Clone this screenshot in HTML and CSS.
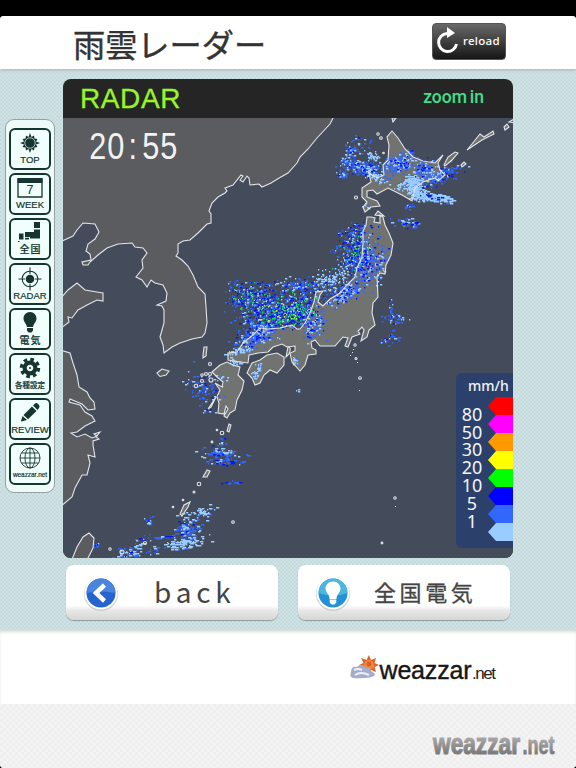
FILE: index.html
```html
<!DOCTYPE html>
<html lang="ja">
<head>
    <meta charset="UTF-8">
    <meta name="viewport" content="width=device-width, initial-scale=1.0">
    <title>雨雲レーダー</title>
    <link rel="stylesheet" href="styles.css">
</head>
<body>
<div class="page">
    <header class="header">
        <h1>雨雲レーダー</h1>
        <button class="reload">
            <svg width="22" height="28" viewBox="0 0 22 28"><path d="M10 6.500A9 9 0 1 0 19.500 17" fill="none" stroke="#fff" stroke-width="3"/><path d="M10 0L18 6L10 11Z" fill="#fff"/></svg>
            <span>reload</span>
        </button>
    </header>

    <main class="main">
        <nav class="side">
            <a class="item">
                <svg width="22" height="22" viewBox="-11 -11 22 22"><path d="M0-10L1.500-6L4-7.500L4.500-4.500L7.500-4L6-1.500L10 0L6 1.500L7.500 4L4.500 4.500L4 7.500L1.500 6L0 10L-1.500 6L-4 7.500L-4.500 4.500L-7.500 4L-6 1.500L-10 0L-6-1.500L-7.500-4L-4.500-4.500L-4-7.500L-1.500-6Z"/><circle r="5.200" stroke="#f0fffc" stroke-width=".7"/></svg>
                <span>TOP</span>
            </a>
            <a class="item">
                <svg width="26" height="22" viewBox="0 0 26 22"><path d="M1 2H25V20H1Z" fill="none" stroke="#17352f" stroke-width="1.300"/><path d="M.5 1H25.500V6H.5Z"/><text x="13" y="17" font-size="12.500" text-anchor="middle">7</text></svg>
                <span>WEEK</span>
            </a>
            <a class="item jp">
                <svg width="24" height="20" viewBox="0 0 24 20"><path d="M16 0H22V6H16ZM16 7.500H22V16.500H12V15H7V10H16ZM1 11.500H5.500V17.500H1ZM7 15.800H11V17.500H7ZM0 19H1.500V20H0Z"/></svg>
                <span>全国</span>
            </a>
            <a class="item">
                <svg width="24" height="24" viewBox="-12 -12 24 24"><circle r="7.800" fill="none" stroke="#17352f" stroke-width="1.100"/><circle r="4.300"/><path d="M0-11.500V-5M0 5V11.500M-11.500 0H-5M5 0H11.500" stroke="#17352f" stroke-width="1.100"/></svg>
                <span>RADAR</span>
            </a>
            <a class="item jp">
                <svg width="16" height="22" viewBox="0 0 16 22"><path d="M8 0C4 0 1.500 3 1.500 6.500C1.500 10 4.500 11.500 4.900 15H11.100C11.500 11.500 14.500 10 14.500 6.500C14.500 3 12 0 8 0ZM5 16H11V18.500L9.500 20.500H6.500L5 18.500Z"/></svg>
                <span>電気</span>
            </a>
            <a class="item small">
                <svg width="22" height="22" viewBox="-11 -11 22 22"><circle r="5.400" fill="none" stroke="#17352f" stroke-width="4.200"/><circle r="8.500" fill="none" stroke="#17352f" stroke-width="3.400" stroke-dasharray="3.600 3.080"/><circle r="1"/></svg>
                <span>各種設定</span>
            </a>
            <a class="item">
                <svg width="22" height="22" viewBox="0 0 22 22"><path d="M2 19L3.500 14L8 18L2.500 19.500ZM4.500 13L13 4.500L17.500 9L9 17.300ZM14 3.500L16 1.500Q17.500 .5 19 2L20 3Q21.300 4.500 20 6L18.500 8Z"/></svg>
                <span>REVIEW</span>
            </a>
            <a class="item tiny">
                <svg width="22" height="22" viewBox="-11 -11 22 22"><g fill="none" stroke="#17352f" stroke-width=".9"><circle r="10"/><ellipse rx="5" ry="10"/><path d="M0-10V10M-10 0H10M-8.500-5H8.500M-8.500 5H8.500"/></g></svg>
                <span>weazzar.net</span>
            </a>
        </nav>

        <div class="content">
            <section class="radar">
                <div class="radar-bar">
                    <h2>RADAR</h2>
                    <a>zoom in</a>
                </div>
                <div class="map">
                    <svg width="450" height="440" viewBox="63 118 450 440">
                        <defs>
                            <g id="asia">
                                <path d="M334 116L330 124L317 138L308 149L300 157L297 163L288 173L280 177.500L271 183L262 187L259 184L250 185L249 178L247 176L243 182L240 180L243 176L241 175L233 185L225 188L227 191L225 193L218 197L212 203L209 211L211 214L211 223L207 224L198 233L190 240L183 241L178 244L178 253L176 256L182 260L188 266L193 275L198 287L205 294L206 307L207 323L205 333L202 337L192 339L180 343L172 347L164 353L163 345L160 337L162 330L164 323V310L162 306L157 305L166 301L167 293L163 285L155 283L151 280L147 287L142 280L136 277L143 268L142 260L147 253L143 248L135 247L132 243L118 244L107 248L98 255L90 262L88 265L83 265L82 262L91 260L90 254L86 251L88 244L95 239L99 232L95 224L83 223L77 230L73 236L60 242V115Z"/>
                                <path d="M60 299L68 290L77 283L85 290L97 292L103 293L103 301L97 300L87 305L78 310L72 318L68 317L69 322L60 329Z"/>
                                <path d="M60 350L70 353L73 363L77 375L79 387L87 392L90 398L94 402L95 409L88 410L82 404L70 399L69 402L80 405L85 412L92 416L95 421L85 426L77 432L71 433L77 437L85 434L92 438L97 436L94 434L100 432L96 437L99 439L93 441L93 445L95 457L88 455L90 463L87 475L82 475L75 488L72 497L60 507Z"/>
                                <path d="M71 562L77 547L83 537L89 533L94 538L93 548L86 562Z"/>
                                <path d="M157 373L162 369L169 371L166 375L160 376.500Z"/>
                            </g>
                            <g id="japan">
                                <path d="M367 217L366 225L363 231L363 243L362 257L357 268L355 277L347 285L340 293L330 299L323 306L318 302L320 295L323 291L316 292L314 302L310 313L305 323L300 329L297 329L292 325L280 328L268 329L260 328L253 335L243 343L237 352L228 353V360L240 362L248 363L249 355L258 353L268 352L273 347L282 344L287 347L295 346L295 351L290 353L292 362L300 371L305 365L308 355L316 354L316 350L312 348L311 342L315 340L320 346H335L343 337L348 338L345 346L348 347L352 337L360 334L358 331L362 327L364 330L361 341L367 337L369 330L375 325L372 313L373 303L378 297L377 277L380 273L385 274L386 265L391 255L393 243L389 233L385 225L383 217L380 215V223L374 222L375 218L371 217Z"/>
                                <path d="M375 215L378 211L384 216Z"/>
                                <path d="M247 373L252 363L260 360L267 355L277 353L284 357L284 365L277 373L270 370L264 375L260 383L255 385L252 378Z"/>
                                <path d="M212 372L220 365L227 362L233 365L240 367L238 375L244 381L242 390L237 400L235 410L230 413L227 418L224 416L228 409L226 406L224 414L218 413L219 403L217 397L220 390L215 383L222 387L223 382L217 377Z"/>
                                <path d="M392 131L387 137L389 145L388 160L383 165L384 175L377 178L369 173L371 182L362 188L362 197L367 202L363 207L365 212L371 207L380 206L377 201L367 197L367 191L373 190L377 194L388 188L402 195L412 201L415 188L423 182L435 178L438 181L445 175L440 170L438 163L443 155L435 163L423 161L413 157L405 149L398 138Z"/>
                                <path d="M444 165L448 157L455 152L458 153L452 160L445 166ZM467 150L472 144L480 134L484 137L493 131L494 134L482 140L473 146ZM461 165L464 162L466 164L462 167ZM504 127L507 124L509 127L505 130ZM509 122L514 119V123ZM392 118L393 122L396 118Z"/>
                                <path d="M288 347Q292 347 289 354L286 357ZM203 355L204 347L207 347L206 356L203 358ZM203 477L207 470L210 471L207 477ZM180 514L184 505L190 502L188 507L182 516ZM227 431L229 424L231 425L229 432ZM214 400L208 409L211 407L216 397Z"/>
                            </g>
                            <g id="islets">
                                <circle cx="210" cy="364" r="1.500"/><circle cx="202" cy="375" r="1.200"/><circle cx="206" cy="374" r="1.500"/><circle cx="210" cy="374" r="1.500"/><circle cx="202" cy="381" r="1.500"/><circle cx="211" cy="380" r="2"/><circle cx="196" cy="386" r="1.700"/><circle cx="222" cy="433" r="1.800"/><circle cx="217" cy="430" r=".8"/><circle cx="212" cy="442" r=".9"/><circle cx="199" cy="484" r="1.800"/><circle cx="194" cy="492" r="1"/><circle cx="233" cy="522" r="1.300"/><circle cx="183" cy="500" r=".8"/><circle cx="173" cy="507" r=".8"/><circle cx="145" cy="543" r="1.500"/><circle cx="122" cy="552" r="2"/><circle cx="110" cy="549" r="1.200"/><circle cx="355" cy="345" r="1.200"/><circle cx="356" cy="358.500" r="1"/><circle cx="360" cy="378" r="1.300"/><circle cx="395" cy="498" r="1.200"/><circle cx="382" cy="543" r=".9"/><circle cx="378" cy="134" r="1.200"/><circle cx="381" cy="138" r="1.300"/><circle cx="356" cy="197.500" r="1.500"/><circle cx="383.500" cy="153" r=".8"/>
                            </g>
                        </defs>
                        <use href="#asia" class="land"/>
                        <use href="#japan" class="land jp-land"/>
                        <g id="rain"></g>
                        <g class="coast"><use href="#asia"/><use href="#japan"/><use href="#islets"/></g>
                        <path class="dots" d="M353 349h1v1h-1zM352 352h1v1h-1zM350 355h1v1h-1zM357 362h1v1h-1zM359 390h1v1h-1zM395 506h1v1h-1z"/>
                    </svg>
                    <div class="clock"><span>2</span><span>0</span><span>:</span><span>5</span><span>5</span></div>
                    <div class="legend">
                        <b>mm/h</b>
                        <div class="scale">
                            <div class="nums">
                                <span>80</span><span>50</span><span>30</span><span>20</span><span>10</span><span>5</span><span>1</span>
                            </div>
                            <div class="colors">
                                <i class="c80"></i><i class="c50"></i><i class="c30"></i><i class="c20"></i><i class="c10"></i><i class="c5"></i><i class="c1"></i><i class="c0"></i>
                            </div>
                        </div>
                    </div>
                </div>
            </section>

            <div class="buttons">
                <a class="btn">
                    <svg width="36" height="36" viewBox="-18 -18 36 36">
                        <circle cy="1" r="17" fill="#ccc"/><circle r="16.500" fill="#fff"/><circle r="14.500" fill="#2464cf"/>
                        <path d="M-14.500 0A14.500 14.500 0 0 1 14.500 0Q0-3-14.500 0Z" fill="#4a84dd"/>
                        <path d="M3.500-8L-5 0L3.500 8" fill="none" stroke="#fff" stroke-width="4.500"/>
                    </svg>
                    <span class="back">back</span>
                </a>
                <a class="btn">
                    <svg width="36" height="36" viewBox="-18 -18 36 36">
                        <circle cy="1" r="17" fill="#ccc"/><circle r="16.500" fill="#fff"/><circle r="14.500" fill="#2391d5"/>
                        <path d="M-14.500 0A14.500 14.500 0 0 1 14.500 0Q0 5-14.500 0Z" fill="#4db6e0"/>
                        <path d="M0-11.500C-4.500-11.500-7.500-8-7.500-4.500C-7.500-.5-3.500 1-3.500 6H3.500C3.500 1 7.500-.5 7.500-4.500C7.500-8 4.500-11.500 0-11.500ZM-3.300 6.500H3.300V9.500L1.500 11.500H-1.500L-3.300 9.500Z" fill="#fff"/>
                    </svg>
                    <span class="denki">全国電気</span>
                </a>
            </div>
        </div>
    </main>

    <div class="logo">
        <svg width="148" height="30" viewBox="349 653 148 30">
            <path d="M369 655L371 660L376 658L374.500 663L379 665L374.500 667L376 672L371 670L369 675L366.500 670L362 672L363 667L359 665L363.500 663L361 658L366.500 660Z" fill="#d8642b"/>
            <circle cx="369" cy="665" r="5" fill="#f08a35"/>
            <circle cx="369" cy="664" r="2.500" fill="#e25b2d"/>
            <path d="M353 678Q349 677 351 672Q351 666 357 667Q362 662 366 668Q370 666 371 671Q377 674 374 676Q368 679 353 678Z" fill="#a6adcb"/>
            <path d="M354 670Q358 668 362 670M355 675Q361 671 369 675" stroke="#eef0fa" stroke-width="2" fill="none"/>
            <text x="379.500" y="678.500" class="name" textLength="92">weazzar</text>
            <text x="472" y="678.500" class="net" textLength="24">.net</text>
        </svg>
    </div>

    <footer class="footer">
        <svg width="126" height="40" viewBox="431 724 126 40">
            <defs><linearGradient id="gray" x1="0" y1="0" x2="0" y2="1"><stop offset=".2" stop-color="#b4b4b4"/><stop offset=".8" stop-color="#7c7c7c"/></linearGradient></defs>
            <text x="433" y="753.500" class="foot-name" textLength="87" lengthAdjust="spacingAndGlyphs">weazzar</text>
            <text x="522.500" y="753.500" class="foot-net" textLength="32" lengthAdjust="spacingAndGlyphs">.net</text>
        </svg>
    </footer>
</div>
<script src="rain.js"></script>
</body>
</html>
```
FILE: styles.css
```css
body { margin: 0; background: #000; font-family: "Liberation Sans", "Noto Sans CJK JP", sans-serif; }
.page { margin-top: 16px; height: 752px; border-radius: 4px; overflow: hidden; background: #fff; display: flex; flex-direction: column; }

.header { height: 53px; flex: none; box-sizing: border-box; padding: 0 70px 0 73px; display: flex; justify-content: space-between; background: #fff; z-index: 1; box-shadow: 0 1px 3px #aab5b5; }
h1 { margin: 4px 0 0; font: 400 32.2px/46px "Noto Sans CJK JP", sans-serif; color: #333; -webkit-text-stroke: .4px #333; }
.reload { display: flex; align-items: center; gap: 4px; width: 74px; height: 37px; margin-top: 7px; padding: 0 0 2px 4px; border: 1px solid #555; border-radius: 4px; background: linear-gradient(#686868, #161616); color: #fff; font: 500 11.5px "Noto Sans", sans-serif; letter-spacing: .3px; }

.main {
    height: 561px;
    flex: none;
    display: flex;
    align-items: flex-start;
    background-color: #cfe2e4;
    background-image: conic-gradient(#c5dadd 25%, transparent 0 50%, #c5dadd 0 75%, transparent 0);
    background-size: 4px 4px;
}

/* 左メニュー */
.side { box-sizing: border-box; width: 50px; height: 374px; margin: 50px 0 0 5px; padding: 8px 0 0 3px; border: 1px solid #95a19f; border-radius: 9px; background: #edfaf8; display: flex; flex-direction: column; gap: 3px; }
.item { box-sizing: border-box; width: 42px; height: 42px; border: 2px solid #17352f; border-radius: 6px; background: #f0fffc; color: #17352f; display: flex; flex-direction: column; align-items: center; justify-content: space-between; padding: 2px 0 3px; overflow: hidden; }
.item svg { fill: #17352f; flex: none; }
.item span { font-size: 9.5px; line-height: 10px; white-space: nowrap; -webkit-text-stroke: .2px #17352f; }
.item.jp span { font: 500 10px/12px "Noto Sans CJK JP", sans-serif; letter-spacing: 1px; margin-right: -1px; }
.item.small span { font: 500 7.5px/10px "Noto Sans CJK JP", sans-serif; }
.item.tiny span { font-size: 6.4px; }

.content { margin: 10px 0 0 8px; width: 450px; }
.radar { border-radius: 8px; overflow: hidden; background: #252525; }
.radar-bar { height: 39px; display: flex; justify-content: space-between; align-items: center; padding: 0 29px 0 17px; }
.radar-bar h2 { margin: 0; font-size: 28px; font-weight: 400; letter-spacing: .6px; color: #98f52c; -webkit-text-stroke: .3px #98f52c; }
.radar-bar a { margin-top: -4px; font: 500 17.5px Roboto, sans-serif; word-spacing: -1.5px; color: #40e08c; }

.map { position: relative; height: 440px; background: #444c5c; }
.map svg { display: block; }
.land { fill: #5b5c5f; }
.jp-land { fill: #717371; }
.coast { fill: none; stroke: #e2e5e9; stroke-width: 1.1; }
.dots { fill: #dfe3e8; }

.clock { position: absolute; left: 26px; top: 8px; display: flex; font-size: 37px; line-height: 42px; color: #f2f2f2; }
.clock span { width: 17.7px; display: flex; justify-content: center; transform: scaleX(.83); }

.legend { position: absolute; right: 0; top: 255px; width: 57px; height: 175px; border-radius: 6px 0 0 6px; background: #2b416b; color: #f1f4fa; font-family: "Noto Sans", sans-serif; }
.legend b { display: block; margin-left: 12px; height: 24px; font-size: 14px; line-height: 25px; font-weight: 500; }
.scale { display: flex; justify-content: space-between; }
.nums { width: 33px; margin-top: 9px; display: flex; flex-direction: column; text-align: center; }
.nums span { font-size: 18px; line-height: 17.7px; }
.nums span:last-child { margin-top: 1px; }
.colors i { display: block; width: 25px; height: 18px; clip-path: polygon(8px 0, 100% 0, 100% 100%, 8px 100%, 0 50%); }
.c80 { background: #f00; }
.c50 { background: #f0f; }
.c30 { background: #f90; }
.c20 { background: #ff0; }
.c10 { background: #0f0; }
.c5 { background: #00f; }
.c1 { background: #36f; }
.c0 { background: #9cf; }

.buttons { display: flex; gap: 20px; padding: 7px 3px 0; }
.btn { flex: 1; height: 55px; border-radius: 8px; background: linear-gradient(#fff 74%, #e8e8e8 82%, #d6d6d6); box-shadow: 0 1px 1px #8f9a9a; display: flex; align-items: center; padding-left: 17px; color: #444; }
.back { margin: -4px 0 0 35px; font: 400 28px "Noto Sans CJK JP", sans-serif; letter-spacing: 4.8px; }
.denki { margin: -4px 0 0 23px; font: 400 22px "Noto Sans CJK JP", sans-serif; letter-spacing: 3.6px; -webkit-text-stroke: .3px #444; }

.logo { height: 74px; flex: none; display: flex; justify-content: flex-end; padding: 23px 79px 0 0; box-sizing: border-box; box-shadow: inset 0 3px 4px -2px #c5c9c9; }
.name { font-size: 25px; fill: #161616; stroke: #161616; stroke-width: .4px; }
.net { font-size: 17px; fill: #222; }
.footer { flex: 1; display: flex; justify-content: flex-end; align-items: flex-start; padding: 20px 19px 0 0; background-color: #f4f4f4; background-image: conic-gradient(#eeeeee 25%, transparent 0 50%, #eeeeee 0 75%, transparent 0); background-size: 6px 6px; }
.foot-name { font: bold 30px "Liberation Sans", sans-serif; fill: url(#gray); stroke: url(#gray); stroke-width: 1.2px; }
.foot-net { font: bold 25px "Liberation Sans", sans-serif; fill: url(#gray); stroke: url(#gray); stroke-width: .8px; }
```
FILE: rain.js
```js
// cx, cy, rx, ry, 角度, セル数, 強さ, セル幅
const areas = [
    // 北海道
    [362, 167, 20, 7, 12, 230, 'mid', 2],
    [349, 155, 7, 12, 20, 70, 'mid', 2],
    [358, 145, 16, 7, -40, 28, 'mid', 2],
    [371, 156, 9, 4, 15, 40, 'low', 2],
    [342, 174, 5, 4, 0, 28, 'mid', 2],
    [376, 178, 11, 5, 25, 60, 'low', 2],
    [399, 163, 17, 9, -30, 270, 'mid', 2],
    [424, 168, 14, 8, -10, 140, 'mid', 2],
    [437, 177, 23, 7, -25, 170, 'mid', 2],
    [413, 185, 8, 10, -20, 260, 'low', 3],
    [420, 195, 10, 5, 0, 130, 'low', 3],
    [436, 198, 16, 4, 5, 140, 'low', 4],
    [435, 197, 16, 3, 5, 110, 'mid', 3],
    [400, 186, 5, 4, 0, 30, 'low', 2],
    [408, 206, 5, 3, 0, 13, 'mid', 2],
    [407, 222, 13, 5, 10, 42, 'mid', 3],
    [366, 206, 4, 4, 0, 10, 'low', 2],
    // 東北
    [353, 249, 17, 24, 12, 360, 'high', 1.500],
    [361, 229, 10, 6, -10, 28, 'mid', 2],
    [364, 262, 8, 20, 10, 160, 'mid', 2],
    [375, 264, 10, 20, 15, 140, 'mid', 2],
    [338, 275, 21, 12, -20, 110, 'low', 1.500],
    [344, 293, 18, 8, -28, 230, 'mid', 2],
    [324, 280, 14, 9, 0, 35, 'low', 2],
    // 北陸・山陰
    [302, 285, 26, 7, 5, 120, 'mid', 2],
    [249, 296, 21, 14, 10, 180, 'high', 1.500],
    [268, 305, 36, 17, 12, 390, 'high', 1.500],
    [286, 315, 29, 12, -5, 380, 'top', 1.500],
    [298, 301, 20, 17, 0, 160, 'high', 1.500],
    [312, 323, 12, 15, -25, 170, 'mid', 2],
    [257, 324, 22, 8, 20, 150, 'mid', 2],
    [253, 337, 18, 10, -25, 220, 'mid', 2],
    [240, 350, 12, 4, -15, 70, 'low', 2],
    [258, 368, 3, 5, 0, 24, 'low', 2],
    [294, 360, 4, 5, 20, 20, 'low', 2],
    [255, 375, 4, 4, 0, 18, 'low', 2],
    [234, 361, 8, 4, 20, 24, 'low', 2],
    // 関東沖
    [393, 318, 12, 5, 0, 42, 'mid', 2],
    [391, 306, 2, 8, 0, 16, 'mid', 1.500],
    [387, 339, 11, 5, -20, 28, 'mid', 3],
    // 九州・南西諸島
    [203, 387, 17, 13, 30, 90, 'mid', 2],
    [208, 410, 8, 4, 0, 11, 'mid', 2],
    [222, 378, 6, 4, 10, 12, 'low', 2],
    [222, 453, 21, 4, 3, 65, 'mid', 4],
    [224, 461, 19, 4, 0, 42, 'mid', 4],
    [221, 442, 8, 5, 0, 14, 'mid', 2],
    [229, 482, 10, 2, 0, 11, 'mid', 3],
    [196, 514, 19, 6, -12, 60, 'low', 3],
    [185, 529, 13, 8, 10, 105, 'mid', 3],
    [185, 542, 20, 6, -8, 100, 'low', 4],
    [167, 537, 14, 1.500, 0, 20, 'mid', 4],
    [149, 521, 5, 5, -20, 14, 'mid', 2],
    [130, 550, 14, 5, -15, 36, 'low', 3],
    [136, 553, 22, 4, -10, 36, 'mid', 3],
    [139, 541, 11, 4, -30, 18, 'mid', 3],
    [96, 546, 3, 5, 0, 12, 'mid', 2],
    [298, 390, 1.500, 1, 0, 3, 'low', 2]
];

const levels = {
    low: ['#9cf', '#9cf', '#9cf', '#9cf', '#36f'],
    mid: ['#36f', '#36f', '#36f', '#36f', '#36f', '#9cf', '#36f', '#9cf', '#0618ee'],
    high: ['#36f', '#36f', '#36f', '#9cf', '#0618ee', '#0618ee', '#36f', '#36f', '#9cf', '#0618ee', '#36f', '#1ed858'],
    top: ['#36f', '#36f', '#0618ee', '#0618ee', '#9cf', '#0618ee', '#16e04a', '#16e04a', '#36f', '#0618ee', '#d4e82c']
};

let seed = 2055;
function rand() {
    seed = (seed * 16807) % 2147483647;
    return seed / 2147483647;
}

const paths = {};
for (const [cx, cy, rx, ry, deg, count, level, w] of areas) {
    const a = deg * Math.PI / 180;
    const colors = levels[level];
    for (let i = 0; i < count; i++) {
        // 端にいくほどまばらにする
        const dx = (rand() + rand() + rand() - 1.5) * rx;
        const dy = (rand() + rand() + rand() - 1.5) * ry;
        const x = Math.round(cx + dx * Math.cos(a) - dy * Math.sin(a));
        const y = Math.round(cy + dx * Math.sin(a) + dy * Math.cos(a));
        const len = 1.3 + Math.floor(rand() * w);
        const color = colors[Math.floor(rand() * colors.length)];
        paths[color] = (paths[color] || '') + `M${x} ${y}h${len}v1.400h-${len}z`;
    }
}

const rain = document.getElementById('rain');
for (const color of ['#36f', '#9cf', '#0618ee', '#16e04a', '#1ed858', '#d4e82c']) {
    const p = document.createElementNS('http://www.w3.org/2000/svg', 'path');
    p.setAttribute('d', paths[color]);
    p.setAttribute('fill', color);
    rain.appendChild(p);
}
```
